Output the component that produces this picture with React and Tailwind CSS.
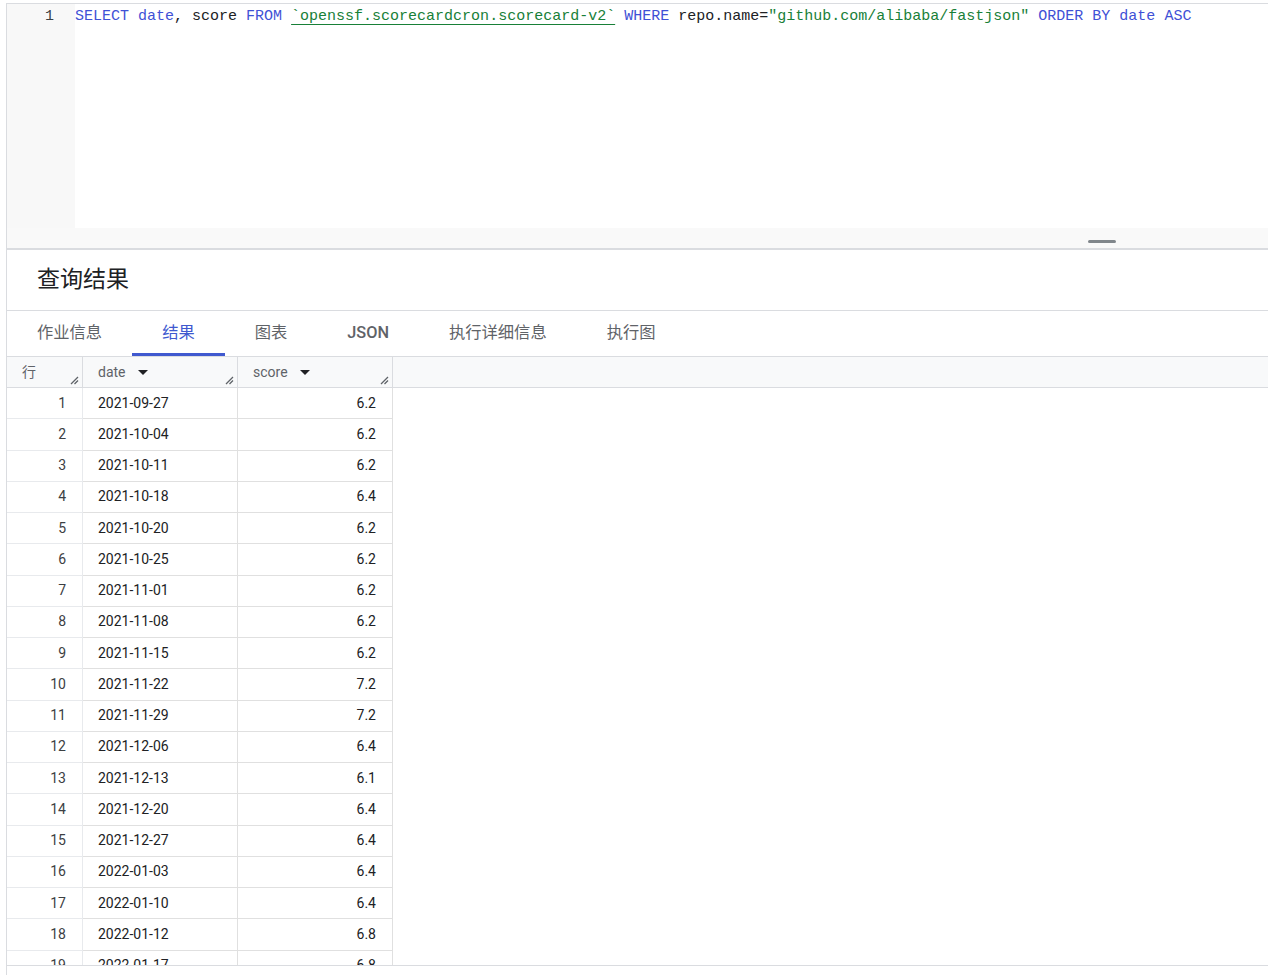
import React from 'react';

const rows = [
  ['2021-09-27', '6.2'],
  ['2021-10-04', '6.2'],
  ['2021-10-11', '6.2'],
  ['2021-10-18', '6.4'],
  ['2021-10-20', '6.2'],
  ['2021-10-25', '6.2'],
  ['2021-11-01', '6.2'],
  ['2021-11-08', '6.2'],
  ['2021-11-15', '6.2'],
  ['2021-11-22', '7.2'],
  ['2021-11-29', '7.2'],
  ['2021-12-06', '6.4'],
  ['2021-12-13', '6.1'],
  ['2021-12-20', '6.4'],
  ['2021-12-27', '6.4'],
  ['2022-01-03', '6.4'],
  ['2022-01-10', '6.4'],
  ['2022-01-12', '6.8'],
  ['2022-01-17', '6.8'],
];

const tabs = ['作业信息', '结果', '图表', 'JSON', '执行详细信息', '执行图'];

const ResizeGrip = () => (
  <svg className="absolute right-[3px] bottom-[2px]" width="9" height="9" viewBox="0 0 9 9">
    <path d="M1 8 L8 1 M4.5 8 L8 4.5" stroke="#5f6368" strokeWidth="1.3" fill="none" />
  </svg>
);

const SortArrow = () => (
  <svg className="ml-[12px]" width="10" height="5" viewBox="0 0 10 5">
    <path d="M0 0 L10 0 L5 5 Z" fill="#202124" />
  </svg>
);

// SQL line with simple syntax colours
const SqlLine = () => (
  <div className="whitespace-pre pt-[2px] text-[15px] leading-[22px] text-[#202124]" style={{ fontFamily: '"Liberation Mono", monospace' }}>
    <span className="text-[#3f51d6]">SELECT</span> <span className="text-[#3f51d6]">date</span>, score <span className="text-[#3f51d6]">FROM</span>{' '}
    <span className="text-[#188038] underline decoration-[#188038] underline-offset-[4px]">`openssf.scorecardcron.scorecard-v2`</span>{' '}
    <span className="text-[#3f51d6]">WHERE</span> repo.name=<span className="text-[#188038]">"github.com/alibaba/fastjson"</span>{' '}
    <span className="text-[#3f51d6]">ORDER</span> <span className="text-[#3f51d6]">BY</span> <span className="text-[#3f51d6]">date</span>{' '}
    <span className="text-[#3f51d6]">ASC</span>
  </div>
);

export default function App() {
  return (
    <div
      className="w-[1269px] h-[975px] overflow-hidden bg-white pl-[6px] pr-px pt-[3px]"
      style={{ fontFamily: 'Roboto, "Noto Sans CJK SC", sans-serif' }}
    >
      <div className="h-full flex flex-col border-l border-t border-[#dadce0]">
        {/* editor */}
        <div className="flex h-[224px] shrink-0">
          <div className="w-[68px] shrink-0 bg-[#f8f8f8] pt-[2px] pr-[21px] text-right text-[15px] leading-[22px] text-[#3c4043]" style={{ fontFamily: '"Liberation Mono", monospace' }}>
            1
          </div>
          <div className="flex-1 bg-white">
            <SqlLine />
          </div>
        </div>
        <div className="h-[22px] shrink-0 bg-[#f9f9f9] border-b-2 border-[#dadce0] flex items-start">
          <div className="ml-[1081px] mt-[12px] w-[28px] h-[3px] rounded-full bg-[#80868b]" />
        </div>

        {/* results heading */}
        <div className="h-[61px] shrink-0 border-b border-[#dadce0] flex items-center pl-[30px] pb-[6px]">
          <span className="text-[23px] text-[#202124]" style={{ fontFamily: '"Noto Sans CJK SC", sans-serif' }}>查询结果</span>
        </div>

        {/* tabs */}
        <div className="h-[46px] shrink-0 flex border-b border-[#dadce0]">
          {tabs.map((t) => {
            const active = t === '结果';
            return (
              <div
                key={t}
                className={
                  'h-full px-[30px] flex items-center text-[16.3px] border-b-[3px] ' +
                  (active ? 'border-[#4059cf] text-[#4059cf]' : 'border-transparent text-[#5f6368]') +
                  (t === 'JSON' ? ' font-medium text-[#3c4043]' : '')
                }
                style={{ fontFamily: 'Roboto, "Noto Sans CJK SC", sans-serif' }}
              >
                <span className="mt-[3px]">{t}</span>
              </div>
            );
          })}
        </div>

        {/* table header */}
        <div className="h-[31px] shrink-0 flex bg-[#f8f9fa] border-b border-[#dadce0] text-[14px] text-[#5f6368]">
          <div className="relative w-[76px] border-r border-[#dadce0] pl-[15px] flex items-center" style={{ fontFamily: '"Noto Sans CJK SC", sans-serif' }}>
            <span className="-mt-[2px]">行</span>
            <ResizeGrip />
          </div>
          <div className="relative w-[155px] border-r border-[#dadce0] pl-[15px] flex items-center">
            date
            <SortArrow />
            <ResizeGrip />
          </div>
          <div className="relative w-[155px] border-r border-[#dadce0] pl-[15px] flex items-center">
            score
            <SortArrow />
            <ResizeGrip />
          </div>
        </div>

        {/* table body */}
        <div className="h-[578px] shrink-0 overflow-hidden border-b border-[#dadce0]">
          {rows.map(([d, s], i) => (
            <div key={i} className="flex h-[31.25px] text-[14px] text-[#202124]">
              <div className="w-[76px] border-r border-b border-[#e8eaed] pr-[16px] flex items-center justify-end text-[#3c4043]">
                {i + 1}
              </div>
              <div className="w-[155px] border-r border-b border-[#e0e0e0] pl-[15px] flex items-center">{d}</div>
              <div className="w-[155px] border-r border-b border-[#e0e0e0] pr-[16px] flex items-center justify-end">{s}</div>
            </div>
          ))}
        </div>
      </div>
    </div>
  );
}
